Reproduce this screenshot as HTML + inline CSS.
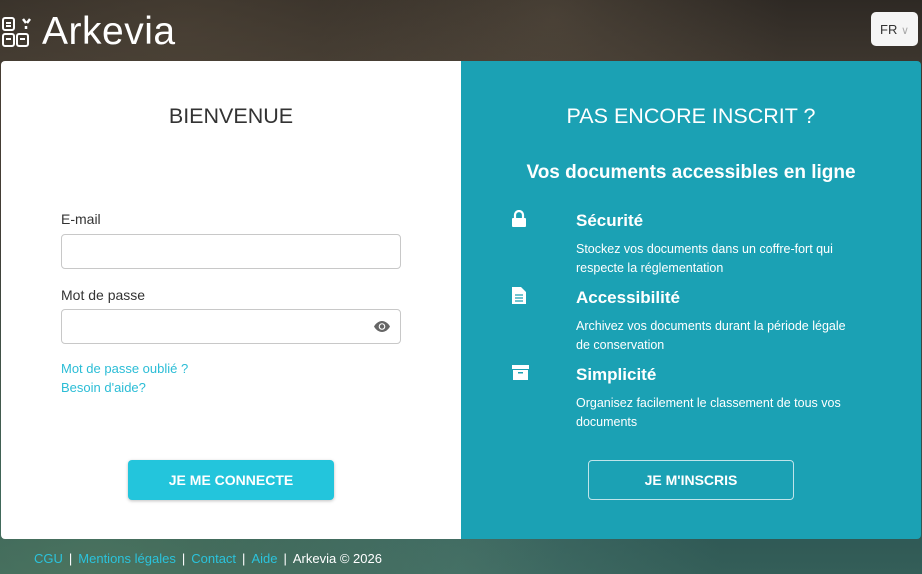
<!DOCTYPE html>
<html><head><meta charset="utf-8"><style>
*{margin:0;padding:0;box-sizing:border-box}
body{width:922px;height:574px;overflow:hidden;position:relative;font-family:"Liberation Sans",sans-serif;
background:linear-gradient(180deg,#2e2924 0%,#3e372f 12%,#3f3a33 35%,#3a4a44 70%,#2c5553 88%,#345e58 100%)}
.bgtex{position:absolute;inset:0;background:
radial-gradient(ellipse at 20% 5%,rgba(90,78,62,.5),transparent 40%),
radial-gradient(ellipse at 60% 3%,rgba(100,88,72,.45),transparent 30%),
radial-gradient(ellipse at 10% 100%,rgba(90,130,100,.6),transparent 40%),
radial-gradient(ellipse at 50% 100%,rgba(80,125,115,.5),transparent 40%)}
.logo{position:absolute;left:2px;top:12px;color:#fff;display:flex;align-items:center}
.logo span{font-size:39px;margin-left:8px;letter-spacing:.5px;line-height:40px}
.lang{position:absolute;left:871px;top:12px;width:47px;height:34px;background:#f5f5f5;border-radius:5px;font-size:13px;color:#333;padding:10px 0 0 9px}
.card{position:absolute;left:1px;top:61px;width:920px;height:478px;border-radius:4px;overflow:hidden;display:flex}
.l{width:460px;background:#fff;position:relative}
.r{width:460px;background:#1ba1b4;position:relative;color:#fff}
h1{font-weight:normal;font-size:21.5px;text-align:center;position:absolute;width:100%}
.lab{position:absolute;left:60px;font-size:14px;color:#333}
.in{position:absolute;left:60px;width:340px;height:35px;border:1px solid #c8c8c8;border-radius:4px}
.lk{position:absolute;left:60px;font-size:13px;color:#2bbdd6}
.btn1{position:absolute;left:127px;top:399px;width:206px;height:40px;background:#23c5dc;border-radius:4px;color:#fff;font-weight:bold;font-size:14px;text-align:center;line-height:40px;box-shadow:0 1px 3px rgba(0,0,0,.25)}
.btn2{position:absolute;left:127px;top:399px;width:206px;height:40px;border:1px solid #bfe4ea;border-radius:4px;color:#fff;font-weight:bold;font-size:14px;text-align:center;line-height:38px}
.f{position:absolute;left:115px;font-weight:bold;font-size:17px}
.d{position:absolute;left:115px;font-size:12.5px;line-height:19px;width:285px}
.ic{position:absolute;left:51px}
.foot{position:absolute;left:34px;top:551px;font-size:13px;color:#fff}
.foot a{color:#2bc3dc;text-decoration:none}
.foot i{font-style:normal;margin:0 6px}
</style></head><body><div class="bgtex"></div>
<div class="logo"><svg width="32" height="32" viewBox="0 0 32 32" fill="none" stroke="#fff" stroke-width="2"><rect x="1" y="2" width="11" height="12" rx="2"/><path d="M4 7h5M4 10h5"/><rect x="1" y="18" width="11" height="12" rx="2"/><rect x="15" y="18" width="11" height="12" rx="2"/><path d="M4 23h5M18 23h5"/><path d="M21 3l3 4M28 3l-3 4M24 10v3" stroke-width="2.5"/></svg><span>Arkevia</span></div>
<div class="lang">FR <span style="color:#aaa;font-size:11px">&#8744;</span></div>
<div class="card">
<div class="l">
<h1 style="top:43px;color:#333">BIENVENUE</h1>
<div class="lab" style="top:150px">E-mail</div>
<div class="in" style="top:173px"></div>
<div class="lab" style="top:226px">Mot de passe</div>
<div class="in" style="top:248px"><svg style="position:absolute;right:10px;top:11px" width="16" height="11" viewBox="0 0 16 11"><path d="M0 5.5C2 2 5 0 8 0s6 2 8 5.5C14 9 11 11 8 11S2 9 0 5.5z" fill="#666"/><circle cx="8" cy="5.5" r="3.3" fill="#fff"/><circle cx="8" cy="5.5" r="2.2" fill="#666"/></svg></div>
<div class="lk" style="top:300px">Mot de passe oublié ?</div>
<div class="lk" style="top:319px">Besoin d'aide?</div>
<div class="btn1">JE ME CONNECTE</div>
</div>
<div class="r">
<h1 style="top:43px">PAS ENCORE INSCRIT ?</h1>
<div style="position:absolute;width:100%;text-align:center;top:101px;font-weight:bold;font-size:19px">Vos documents accessibles en ligne</div>
<svg class="ic" style="top:149px" width="14" height="17" viewBox="0 0 14 17"><path d="M3 8V5a4 4 0 0 1 8 0v3" fill="none" stroke="#fff" stroke-width="2.2"/><rect x="0" y="8" width="14" height="9" rx="1" fill="#fff"/></svg>
<div class="f" style="top:150px">Sécurité</div>
<div class="d" style="top:179px">Stockez vos documents dans un coffre-fort qui respecte la réglementation</div>
<svg class="ic" style="top:226px" width="14" height="17" viewBox="0 0 14 17"><path d="M0 0h9l5 5v12H0z" fill="#fff"/><path d="M3 8h8M3 11h8M3 14h8" stroke="#1ba1b4" stroke-width="1.2"/></svg>
<div class="f" style="top:227px">Accessibilité</div>
<div class="d" style="top:256px">Archivez vos documents durant la période légale de conservation</div>
<svg class="ic" style="top:304px" width="17" height="15" viewBox="0 0 17 15"><rect x="0" y="0" width="17" height="4" fill="#fff"/><rect x="1" y="5" width="15" height="10" fill="#fff"/><rect x="6" y="7" width="5" height="1.5" fill="#1ba1b4"/></svg>
<div class="f" style="top:304px">Simplicité</div>
<div class="d" style="top:333px">Organisez facilement le classement de tous vos documents</div>
<div class="btn2">JE M'INSCRIS</div>
</div>
</div>
<div class="foot"><a>CGU</a><i>|</i><a>Mentions légales</a><i>|</i><a>Contact</a><i>|</i><a>Aide</a><i>|</i>Arkevia © 2026</div>
</body></html>
